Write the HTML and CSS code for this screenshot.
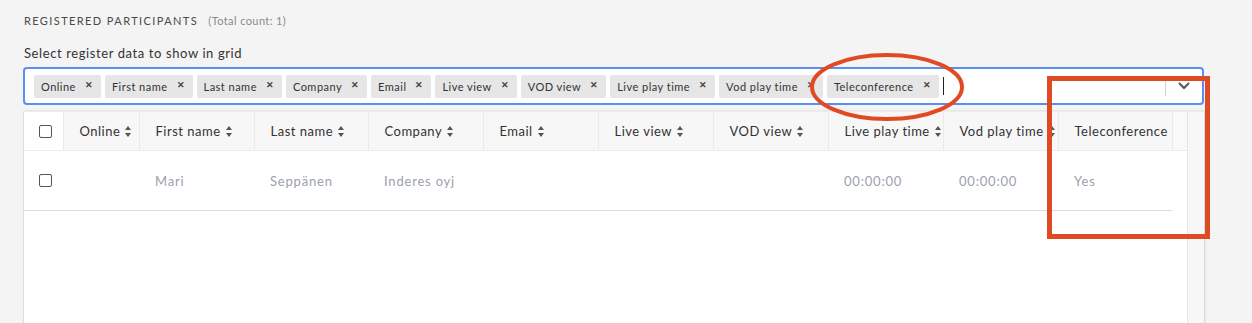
FILE: index.html
```html
<!DOCTYPE html>
<html lang="en">
<head>
    <meta charset="UTF-8">
    <meta name="viewport" content="width=device-width, initial-scale=1.0">
    <title>Registered participants</title>
    <link rel="stylesheet" href="styles.css">
</head>
<body>

    <div class="page">
        <div class="section-title">REGISTERED PARTICIPANTS <span class="count">(Total count: 1)</span></div>
        <div class="field-label">Select register data to show in grid</div>

        <div class="multiselect">
            <div class="chips">
                <span class="chip">Online<span class="remove">&#x2715;</span></span>
                <span class="chip">First name<span class="remove">&#x2715;</span></span>
                <span class="chip">Last name<span class="remove">&#x2715;</span></span>
                <span class="chip">Company<span class="remove">&#x2715;</span></span>
                <span class="chip">Email<span class="remove">&#x2715;</span></span>
                <span class="chip">Live view<span class="remove">&#x2715;</span></span>
                <span class="chip">VOD view<span class="remove">&#x2715;</span></span>
                <span class="chip">Live play time<span class="remove">&#x2715;</span></span>
                <span class="chip">Vod play time<span class="remove">&#x2715;</span></span>
                <span class="chip">Teleconference<span class="remove">&#x2715;</span></span>
                <span class="caret"></span>
            </div>
            <div class="indicators">
                <span class="sep"></span>
                <svg class="chevron" width="12" height="8" viewBox="0 0 12 8"><polyline points="1,1 6,6 11,1" fill="none" stroke="#555" stroke-width="2"/></svg>
            </div>
        </div>

        <div class="grid">
            <div class="grid-main">
                <table>
                    <colgroup>
                        <col style="width:39px"><col style="width:76px"><col style="width:115px"><col style="width:114px">
                        <col style="width:115px"><col style="width:115px"><col style="width:115px"><col style="width:115px">
                        <col style="width:115px"><col style="width:115px"><col style="width:114px"><col>
                    </colgroup>
                    <thead>
                        <tr>
                            <th class="check-cell"><span class="checkbox"></span></th>
                            <th>Online<span class="sort"></span></th>
                            <th>First name<span class="sort"></span></th>
                            <th>Last name<span class="sort"></span></th>
                            <th>Company<span class="sort"></span></th>
                            <th>Email<span class="sort"></span></th>
                            <th>Live view<span class="sort"></span></th>
                            <th>VOD view<span class="sort"></span></th>
                            <th>Live play time<span class="sort"></span></th>
                            <th>Vod play time<span class="sort"></span></th>
                            <th>Teleconference</th>
                            <th class="filler"></th>
                        </tr>
                    </thead>
                    <tbody>
                        <tr>
                            <td class="check-cell"><span class="checkbox"></span></td>
                            <td></td>
                            <td>Mari</td>
                            <td>Seppänen</td>
                            <td>Inderes oyj</td>
                            <td></td>
                            <td></td>
                            <td></td>
                            <td>00:00:00</td>
                            <td>00:00:00</td>
                            <td>Yes</td>
                            <td class="filler"></td>
                        </tr>
                    </tbody>
                </table>
            </div>
            <div class="scrollbar"></div>
        </div>
    </div>

    <!-- markup drawn on top of the screenshot -->
    <svg class="annotations" width="1252" height="323" viewBox="0 0 1252 323">
        <ellipse cx="887" cy="87" rx="75" ry="32" fill="none" stroke="#e04a22" stroke-width="4"/>
        <rect x="1049.5" y="78.5" width="158" height="158" fill="none" stroke="#e04a22" stroke-width="5"/>
    </svg>

</body>
</html>
```

FILE: styles.css
```css
body {
    margin: 0;
    background-color: #f4f4f4;
    font-family: Lato, "Liberation Sans", sans-serif;
    color: #333;
    overflow: hidden;
    height: 323px;
}
.page {
    padding: 14px 48px 0 23px;
}
.section-title {
    font-size: 11px;
    line-height: 14px;
    letter-spacing: 1.4px;
    color: #4a4a4a;
    padding-left: 1px;
}
.section-title .count {
    font-size: 11px;
    letter-spacing: 0.4px;
    color: #8a8a8a;
    margin-left: 6px;
}
.field-label {
    margin-top: 17px;
    font-size: 13px;
    line-height: 16px;
    letter-spacing: 0.6px;
    padding-left: 1px;
    color: #333;
}
.multiselect {
    margin-top: 6px;
    height: 34px;
    border: 2px solid #5b8ef2;
    border-radius: 4px;
    background-color: #fff;
    display: flex;
    align-items: center;
}
.chips {
    flex: 1;
    display: flex;
    align-items: center;
    gap: 4px;
    padding-left: 9px;
}
.chip {
    display: flex;
    align-items: center;
    height: 23px;
    padding: 0 8px 0 7px;
    background-color: #e6e6e6;
    border-radius: 2px;
    font-size: 11px;
    letter-spacing: 0.48px;
    color: #333;
}
.chip .remove {
    font-size: 9px;
    font-weight: bold;
    letter-spacing: 0;
    color: #444;
    margin-left: 9px;
    margin-top: -4px;
}
.caret {
    width: 1px;
    height: 18px;
    background-color: #222;
}
.indicators {
    display: flex;
    align-items: center;
    height: 100%;
}
.sep {
    width: 1px;
    height: 20px;
    background-color: #d0d0d0;
}
.chevron {
    margin: 0 12px 0 12px;
}
.grid {
    margin-top: 6px;
    height: 220px;
    display: flex;
    background-color: #fff;
    border-left: 1px solid #ddd;
    border-top: 1px solid #ececec;
    box-shadow: 1px 0 2px rgba(0, 0, 0, 0.15);
}
.grid-main {
    flex: 1;
}
.scrollbar {
    width: 16px;
    background-color: #f7f7f7;
    border-left: 1px solid #e6e6e6;
}
table {
    width: 100%;
    border-collapse: collapse;
    table-layout: fixed;
}
th {
    height: 38px;
    padding: 0 0 0 16px;
    background-color: #f7f7f7;
    border-left: 1px solid #eaeaea;
    border-bottom: 1px solid #ececec;
    font-size: 13px;
    letter-spacing: 0.5px;
    font-weight: normal;
    color: #333;
    text-align: left;
    white-space: nowrap;
    overflow: visible;
}
th.check-cell {
    background-color: #fff;
    border-left: none;
}
th.filler {
    background-color: #f9f9f9;
    padding: 0;
}
td {
    height: 59px;
    padding: 0 0 0 16px;
    border-bottom: 1px solid #dadada;
    font-size: 13px;
    letter-spacing: 0.8px;
    color: #9ba1ae;
    white-space: nowrap;
}
td.filler {
    border-bottom: none;
    padding: 0;
}
.check-cell {
    padding: 0 0 0 15px;
}
.checkbox {
    display: block;
    width: 11px;
    height: 11px;
    border: 1px solid #555;
    border-radius: 2px;
    background-color: #fff;
}
.sort {
    display: inline-block;
    position: relative;
    width: 7px;
    height: 11px;
    margin-left: 5px;
    vertical-align: -1px;
}
.sort::before,
.sort::after {
    content: "";
    position: absolute;
    left: 0;
    border-left: 3.5px solid transparent;
    border-right: 3.5px solid transparent;
}
.sort::before {
    top: 0;
    border-bottom: 4px solid #555;
}
.sort::after {
    bottom: 0;
    border-top: 4px solid #555;
}
.annotations {
    position: absolute;
    top: 0;
    left: 0;
    pointer-events: none;
}
```
